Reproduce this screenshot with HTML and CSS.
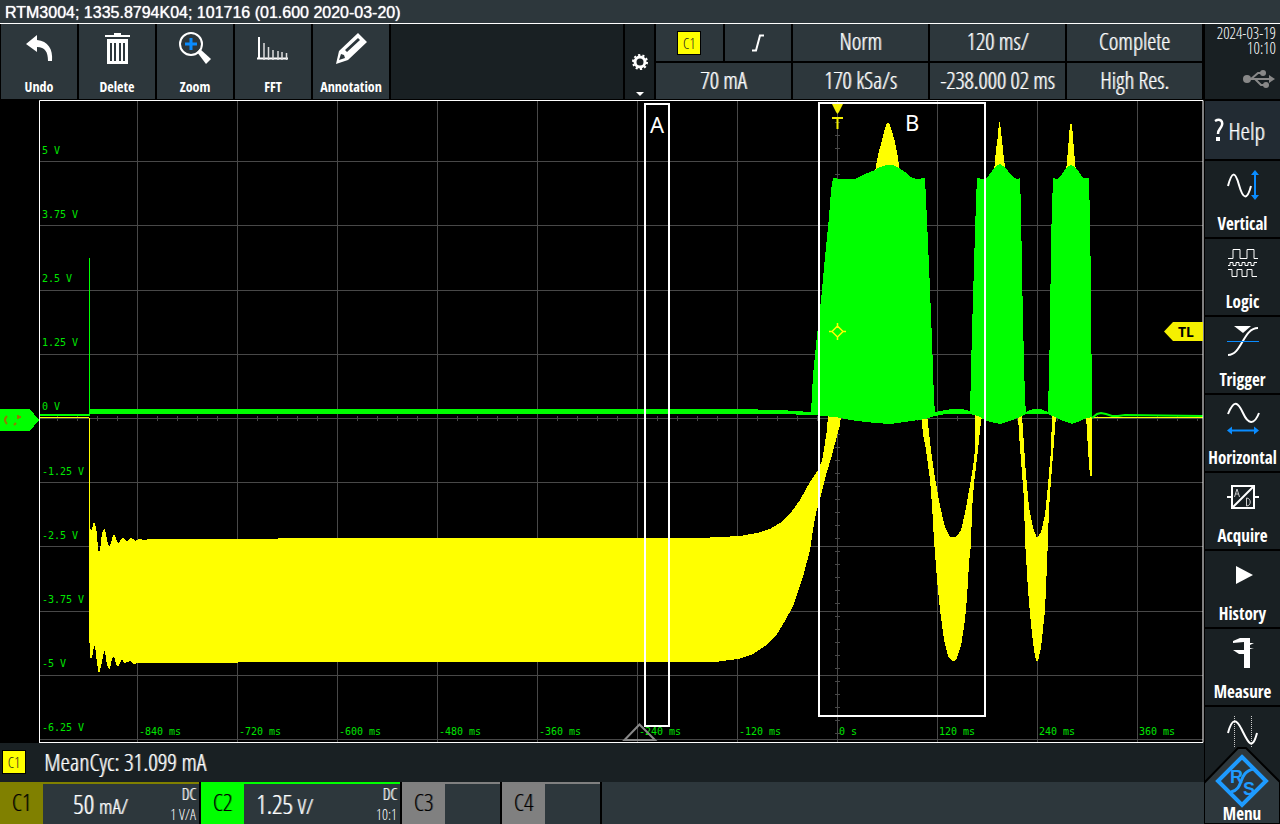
FILE: index.html
```
<!DOCTYPE html>
<html lang="en">
<head>
<meta charset="utf-8">
<title>RTM3004</title>
<link rel="stylesheet" href="styles.css">
</head>
<body>
<header class="title">RTM3004; 1335.8794K04; 101716 (01.600 2020-03-20)</header>
<div class="scope">
  <main class="work">
    <div class="toolbar">
      <button class="tool"><svg class="icon" viewBox="0 0 36 36"><path d="M5 14 L16 5 V10 C27 11 32 19 31 31 H27 C27 22 24 17 16 17 V22 Z" fill="#fff"/></svg><span>Undo</span></button>
      <button class="tool"><svg class="icon" viewBox="0 0 36 36"><path fill="#fff" fill-rule="evenodd" d="M15 3h7v2h9v2H6V5h9zM8 9h21v25H8zM11 13v18h2V13zM15 13v18h2V13zM20 13v18h2V13zM24 13v18h2V13z"/></svg><span>Delete</span></button>
      <button class="tool"><svg class="icon" viewBox="0 0 36 36"><circle cx="14" cy="14" r="11" fill="none" stroke="#fff" stroke-width="2"/><path d="M14 8v12M8 14h12" stroke="#0a8cff" stroke-width="3"/><path d="M20 22l3-3 11 10-5 5z" fill="#fff"/></svg><span>Zoom</span></button>
      <button class="tool"><svg class="icon" viewBox="0 0 36 36"><path d="M2 28.500h31" stroke="#fff" stroke-width="2"/><path d="M4 7v22" stroke="#fff" stroke-width="2"/><path d="M9 13v17M13.500 17v13M18 20v10M23 21v9M27 22v8M31.500 23v7" stroke="#ddd" stroke-width="1.500"/></svg><span>FFT</span></button>
      <button class="tool"><svg class="icon" viewBox="0 0 36 36"><path fill="#fff" fill-rule="evenodd" d="M25 3l9 9-19 18-12 4 3-13zM25 8L12 20l2 2L27 10zM8 24l-2 6 6-2-1-3z"/></svg><span>Annotation</span></button>
      <div class="spare"></div>
      <button class="gear" aria-label="Settings"><svg width="16" height="46" viewBox="0 0 16 46"><circle cx="8" cy="12" r="5" fill="none" stroke="#fff" stroke-width="3"/><circle cx="8" cy="12" r="7" fill="none" stroke="#fff" stroke-width="2" stroke-dasharray="2.200 2.200"/><path d="M4 42h8l-4 4z" fill="#fff"/></svg></button>
      <div class="status">
        <button class="cell half"><span class="chip">C1</span></button>
        <button class="cell half" aria-label="Rising edge"><svg width="14" height="18" viewBox="0 0 14 18"><path d="M1 16.500h4L9 1.500h4" fill="none" stroke="#fff" stroke-width="2"/></svg></button>
        <button class="cell">Norm</button>
        <button class="cell">120 ms/</button>
        <button class="cell">Complete</button>
        <button class="cell">70 mA</button>
        <button class="cell">170 kSa/s</button>
        <button class="cell">-238.000 02 ms</button>
        <button class="cell">High Res.</button>
      </div>
    </div>
    <svg class="plot" viewBox="0 100 1204 643">
      <g class="grid">
        <path d="M137.500 101V742M237.500 101V742M337.500 101V742M437.500 101V742M537.500 101V742M637.500 101V742M737.500 101V742M837.500 101V742M937.500 101V742M1037.500 101V742M1137.500 101V742"/>
        <path d="M40 161.500H1203M40 225.500H1203M40 290.500H1203M40 354.500H1203M40 418.500H1203M40 482.500H1203M40 546.500H1203M40 611.500H1203M40 675.500H1203M40 739.500H1203"/>
        <path class="ticks-x" d="M57 418.500H1203"/>
        <path class="ticks-y" d="M837.500 109V740"/>
      </g>
      <g class="axis">
        <text x="42" y="154">5 V</text><text x="42" y="218">3.75 V</text><text x="42" y="282">2.5 V</text><text x="42" y="346">1.25 V</text><text x="42" y="410">0 V</text><text x="42" y="475">-1.25 V</text><text x="42" y="539">-2.5 V</text><text x="42" y="603">-3.75 V</text><text x="42" y="667">-5 V</text><text x="42" y="731">-6.25 V</text>
        <text x="139" y="735">-840 ms</text><text x="239" y="735">-720 ms</text><text x="339" y="735">-600 ms</text><text x="439" y="735">-480 ms</text><text x="539" y="735">-360 ms</text><text x="639" y="735">-240 ms</text><text x="739" y="735">-120 ms</text><text x="839" y="735">0 s</text><text x="939" y="735">120 ms</text><text x="1039" y="735">240 ms</text><text x="1139" y="735">360 ms</text>
      </g>
      <path class="c1" d="M40 417H89V418H40zM89 418H90V528L92 531 93 523 95 523 97 533 98 551 100 551 101 541 102 533 104 529 105 529 107 540 109 546 110 546 112 540 113 535 115 535 117 541 119 544 120 541 123 537 125 540 127 542 130 538 133 539 135 541 139 539 144 540 150 539 277 539 278 538 640 538 700 538 740 536 757 533 770 529 780 523 790 514 800 500 810 482 818 470 822 461 824 449 827 430 828 415H841L840 425 837 436 832 455 826 475 821 495 816 513 813 530 810 550 803 577 798 592 793 606 785 621 777 634 765 646 753 654 738 659 715 662 640 662 238 662 237 663 142 663 138 663 134 664 130 661 124 663 122 659 120 663 118 667 116 664 114 656 112 659 110 668 109 669 107 665 105 651 104 651 102 662 100 670 99 674 98 670 96 655 95 645 94 646 92 658 90 658 89 627z"/>
      <path class="c1" d="M875 172L878 155 882 140 885 128 887 123H889L891 128 895 142 898 158 900 172zM994 172L996 150 998 135 999 122H1000L1002 140 1004 160 1006 172zM1066 172L1068 150 1070 124H1072L1074 150 1076 172z"/>
      <path class="c1" d="M921 415L923 434 926 450 930 480 932 505 934 540 937 580 940 610 944 640 948 656 951 660 953 661 956 660 961 646 965 620 967 598 969 563 971 545 972 510 974 483 978 450 980 430 982 415H975V450L973 467 970 485 965 513 961 530 958 535 955 537 950 537 945 527 940 506 935 478 931 450 927 415z"/>
      <path class="c1" d="M1018 415L1019 434 1021 460 1024 500 1025 540 1028 590 1031 625 1034 650 1036 661H1038L1041 648 1045 610 1047 565 1049 510 1051 480 1053 455 1056 415H1052L1051 450 1048 485 1045 515 1041 532 1037 538 1033 528 1029 507 1026 475 1024 445 1022 415zM1086 415L1088 450 1090 476H1092V415zM1092 417H1203V418H1092z"/>
      <path class="c2" d="M40 414H89V258H90V409H735L780 410 811 412 813 375 817 335 821 300 825 257 829 217 831 190 833 178 840 179 855 179 865 174 875 170 880 167 886 165 893 165 899 168 905 172 911 177 916 179 925 178 927 220 930 290 932 340 934 400 935 412 945 410 952 409 962 409 970 411 972 330 974 265 976 200 977 178 983 179 987 178 992 171 995 167 1000 164 1003 166 1008 171 1013 177 1017 179 1020 178 1021 210 1022 270 1023 320 1025 400 1026 412 1033 409H1041L1048 412 1050 330 1051 240 1053 178 1057 179 1060 177 1064 171 1068 166 1071 165 1075 167 1079 172 1083 178 1089 178 1090 220 1091 290 1092 417 1087 418 1080 421 1072 424 1063 421 1055 417 1048 414H1026L1020 417 1010 421 1000 424 987 421 978 416 970 414H945L935 416 925 419 905 422 890 424 875 423 850 420 835 417 812 415 780 414H90V416H40z"/>
      <path class="c2-line" d="M1092 418L1097 414 1101 413 1106 414 1112 416 1118 416 1125 415 1203 416"/>
      <path class="frame" d="M39.500 742V100.500H1203V742.500H39"/>
      <path d="M624.500 740L639.500 724.500 655 740z" fill="none" stroke="#888" stroke-width="2"/>
      <path class="c2" d="M0 409H30L39 420 30 431H0z"/>
      <path d="M7 416q-4 4 0 8M18 415v4M20 416v2M14 425l2-2" fill="none" stroke="#967800" stroke-width="2"/>
      <path d="M832 104H843L839 112 837.500 114 836 112z" fill="#f5f000"/>
      <path d="M832 118H843M837.500 118V129" stroke="#f5f000" stroke-width="2"/>
      <path d="M837.500 326l5.500 5.500-5.500 5.500-5.500-5.500zM837.500 323v3M837.500 337v3M829 331.500h3M843 331.500h3" fill="none" stroke="#ff0" stroke-width="1.500"/>
      <path d="M1164 331.500L1173 322H1203V341H1173z" fill="#f5f000"/>
      <text class="level" x="1178" y="337">TL</text>
      <path d="M645 104H669V726H645zM819 103H985V716H819z" fill="none" stroke="#fff" stroke-width="2"/>
      <text class="zone" x="650" y="133">A</text>
      <text class="zone" x="905" y="131">B</text>
    </svg>
    <div class="measure"><span class="chip">C1</span><span>MeanCyc: 31.099 mA</span></div>
    <footer class="channels">
      <button class="channel ch1"><b>C1</b><span class="scale">50<small>mA/</small></span><span class="probe"><span>DC</span><i>1 V/A</i></span></button>
      <button class="channel ch2"><b>C2</b><span class="scale">1.25<small>V/</small></span><span class="probe"><span>DC</span><i>10:1</i></span></button>
      <button class="channel off"><b>C3</b></button>
      <button class="channel off"><b>C4</b></button>
      <div class="rest"></div>
    </footer>
  </main>
  <aside class="side">
    <div class="clock"><time>2024-03-19<br>10:10</time><svg width="34" height="20" viewBox="0 0 34 20"><g fill="none" stroke="#888" stroke-width="2"><path d="M4 10h25M9 10l7-6h5M13 10l6 6h4"/></g><g fill="#888"><circle cx="5" cy="10" r="4"/><path d="M27 6l6 4-6 4z"/><circle cx="24" cy="16" r="3"/><circle cx="21" cy="4" r="3"/></g></svg></div>
    <button class="help"><svg width="10" height="24" viewBox="0 0 10 24"><path d="M1 3C6 0 9 3 8 7c-1 4-4 4-4 9" fill="none" stroke="#fff" stroke-width="2.500"/><path d="M2 19h4v4H2z" fill="#fff"/></svg>Help</button>
    <nav class="menu">
      <button class="tool"><svg class="icon" viewBox="0 0 36 36"><path d="M3 19C7 4 10 4 14 18S22 34 26 19" fill="none" stroke="#fff" stroke-width="2"/><path d="M30 6v24" stroke="#0a8cff" stroke-width="2"/><path d="M30 3l4 5h-8zM30 33l4-5h-8z" fill="#0a8cff"/></svg><span>Vertical</span></button>
      <button class="tool"><svg class="icon" viewBox="0 0 36 36"><path d="M3 13.500h5v-9h7v9h7v-9h7v9h4M3 20.500h2v-3h3v3h3v-3h3v3h3v-3h3v3h3v-3h3v3h3v-3h3M3 24.500h4v7h5v-7h5v7h5v-7h5v7h5" fill="none" stroke="#fff"/></svg><span>Logic</span></button>
      <button class="tool"><svg class="icon" viewBox="0 0 36 36"><path d="M3 32C17 32 18 5 33 5" fill="none" stroke="#fff" stroke-width="2"/><path d="M2 18.500h32" stroke="#0a8cff"/><path d="M9 3h17l-8 7z" fill="#fff"/></svg><span>Trigger</span></button>
      <button class="tool"><svg class="icon" viewBox="0 0 36 36"><path d="M3 13C9-2 13 1 18 12s11 13 16 0" fill="none" stroke="#fff" stroke-width="2"/><path d="M6 29.500h24" stroke="#0a8cff" stroke-width="2"/><path d="M2 29.500l5-4v8zM34 29.500l-5-4v8z" fill="#0a8cff"/></svg><span>Horizontal</span></button>
      <button class="tool"><svg class="icon" viewBox="0 0 36 36"><path d="M7 7h22v22H7zM2 18h5M29 18h5M8 28L28 8" fill="none" stroke="#fff" stroke-width="2"/><path d="M9.500 18l2.500-8 2.500 8M10.500 15h3M21.500 19v8c5 0 5-8 0-8z" fill="none" stroke="#ccc"/></svg><span>Acquire</span></button>
      <button class="tool"><svg class="icon" viewBox="0 0 36 36"><path d="M11 9l17 9-17 9z" fill="#fff"/></svg><span>History</span></button>
      <button class="tool"><svg class="icon" viewBox="0 0 36 36"><path d="M8 6l7-3h10v5h4l-4 2v3l4 1h-4v19h-6V19H14L8 15h11V7L8 8z" fill="#fff"/></svg><span>Measure</span></button>
      <button class="tool" aria-label="Cursor"><svg class="icon" viewBox="0 0 36 36"><path d="M3 20C7 5 11 5 17 17s10 22 15 3" fill="none" stroke="#fff" stroke-width="2"/><path d="M9.500 3v31M26.500 3v31" stroke="#ccc" stroke-dasharray="1 1"/></svg></button>
    </nav>
    <button class="home"><svg class="homebg" viewBox="0 0 76 77"><path d="M0 77V36L34 1H42L76 35V77z" fill="#2d373c" stroke="#000" stroke-width="2"/></svg><svg class="logo" width="54" height="54" viewBox="0 0 54 54"><path d="M27 3L51 27 27 51 3 27z" fill="none" stroke="#1e9bff" stroke-width="4"/><path d="M16 38C30 35 22 18 39 15" fill="none" stroke="#1e9bff" stroke-width="3"/><text class="mark" x="15" y="29">R</text><text class="mark" x="28" y="41">S</text></svg><span>Menu</span></button>
  </aside>
</div>
</body>
</html>
```
FILE: styles.css
```
* { box-sizing: border-box; }
body {
  margin: 0;
  height: 100vh;
  display: flex;
  flex-direction: column;
  overflow: hidden;
  background: #000;
  color: #fff;
  font-family: "Open Sans Condensed Light", "Open Sans Condensed", "Liberation Sans Narrow", "Noto Sans", sans-serif;
  font-weight: 300;
  font-size: 24px;
}
button {
  border: 0;
  margin: 0;
  padding: 0;
  color: inherit;
  font: inherit;
  white-space: nowrap;
}
.title {
  height: 24px;
  padding: 3px 5px 0;
  line-height: 20px;
  background: #2d373c;
  border-bottom: 1px solid #fff;
  font-family: "Liberation Sans", sans-serif;
  font-weight: 400;
  font-size: 16px;
  text-shadow: 0 0 1px #fff;
}
.scope { flex: 1; min-height: 0; display: grid; grid-template-columns: minmax(0, 1fr) 76px; }
.work { min-height: 0; display: flex; flex-direction: column; }

.toolbar { display: flex; gap: 2px; height: 76px; padding: 0 2px 1px 1px; }
.tool {
  flex: none;
  width: 76px;
  padding-top: 6px;
  display: flex;
  flex-direction: column;
  align-items: center;
  gap: 11px;
  background: #2d373c;
  font-family: "Open Sans Condensed", "Liberation Sans Narrow", sans-serif;
  font-size: 14px;
  font-weight: 700;
  line-height: 20px;
}
.icon { width: 36px; height: 36px; flex: none; }
.spare { flex: 1; background: #192023; }
.gear { width: 29px; padding: 26px 0 0; background: #192023; display: flex; justify-content: center; align-items: flex-start; }
.status {
  width: 546px;
  display: grid;
  grid-template-columns: repeat(8, 1fr);
  grid-template-rows: 37px 36px;
  gap: 2px;
}
.cell { grid-column: span 2; padding-bottom: 3px; background: #2d373c; font-size: 23px; line-height: 30px; display: flex; align-items: center; justify-content: center; }
.cell, .measure, .scale, .help { text-shadow: 1px 0 rgba(255, 255, 255, 0.6); }
.half { grid-column: span 1; padding-bottom: 0; }
.chip {
  width: 24px;
  height: 24px;
  background: #ff0;
  color: #222;
  border: 1px solid #000;
  font-size: 15px;
  line-height: 22px;
  text-align: center;
  text-shadow: none;
}

.plot { flex: 1; min-height: 0; width: 100%; display: block; }
.grid path { stroke: #484848; fill: none; }
.grid .ticks-x { stroke-width: 5; stroke-dasharray: 1 19; }
.grid .ticks-y { stroke-width: 5; stroke-dasharray: 1 12; }
.axis { fill: #00e600; font: 10px "DejaVu Sans Mono", monospace; }
.c1 { fill: #ff0; shape-rendering: crispEdges; }
.c2 { fill: #0f0; shape-rendering: crispEdges; }
.c2-line { fill: none; stroke: #0f0; stroke-width: 2; }
.frame { fill: none; stroke: #fff; }
.level { fill: #000; font: bold 14px "Noto Sans", sans-serif; }
.zone { fill: #fff; font: 22px "Noto Sans", sans-serif; }

.measure { height: 39px; padding: 0 0 2px 2px; display: flex; align-items: center; gap: 18px; background: #192023; }
.channels { height: 42px; display: flex; gap: 2px; }
.channel { width: 199px; display: flex; align-items: stretch; background: #2d373c; border-top: 2px solid; }
.channel b { width: 43px; line-height: 36px; color: #000; font-weight: 300; font-size: 24px; text-shadow: 1px 0 rgba(0, 0, 0, 0.4); }
.scale { flex: 1; line-height: 40px; font-size: 26px; display: flex; gap: 5px; align-items: baseline; }
.scale small { font-size: 21px; }
.ch1 .scale { padding-left: 30px; }
.ch2 .scale { padding-left: 12px; }
.probe { width: 46px; padding-right: 3px; display: flex; flex-direction: column; text-align: right; line-height: 20px; font-size: 16px; }
.probe span { text-shadow: 1px 0 rgba(255, 255, 255, 0.6); }
.probe i { font-style: normal; font-size: 15px; }
.ch1 { border-color: #808000; }
.ch1 b { background: #808000; }
.ch2 { border-color: #0f0; }
.ch2 b { background: #0f0; }
.off { width: 98px; border-color: #808080; }
.off b { background: #808080; }
.rest { flex: 1; background: #2d373c; }

.side { position: relative; min-height: 0; padding-left: 1px; display: flex; flex-direction: column; gap: 2px; }
.clock { height: 75px; padding: 2px 4px 0 0; background: #192023; display: flex; flex-direction: column; align-items: flex-end; gap: 13px; font-size: 16px; line-height: 15px; text-align: right; }
.help { height: 58px; padding-right: 6px; display: flex; align-items: center; justify-content: center; gap: 4px; background: #222b33; }
.menu { flex: 1; min-height: 0; overflow: hidden; display: flex; flex-direction: column; gap: 2px; background: #000; }
.menu .tool { height: 76px; width: auto; background: #192023; font-size: 17px; }
.menu .tool:last-child { height: 117px; }
.home { position: absolute; left: 0; right: 0; bottom: 0; height: 77px; background: none; display: flex; flex-direction: column; align-items: center; font-family: "Open Sans Condensed", "Liberation Sans Narrow", sans-serif; font-size: 17px; line-height: 20px; font-weight: 700; }
.homebg { position: absolute; inset: 0; width: 100%; height: 100%; }
.logo { position: relative; margin-top: 7px; flex: none; }
.mark { fill: #1e9bff; font: bold 18px "Liberation Sans", sans-serif; }
.home span { position: relative; margin-top: -4px; }
```
